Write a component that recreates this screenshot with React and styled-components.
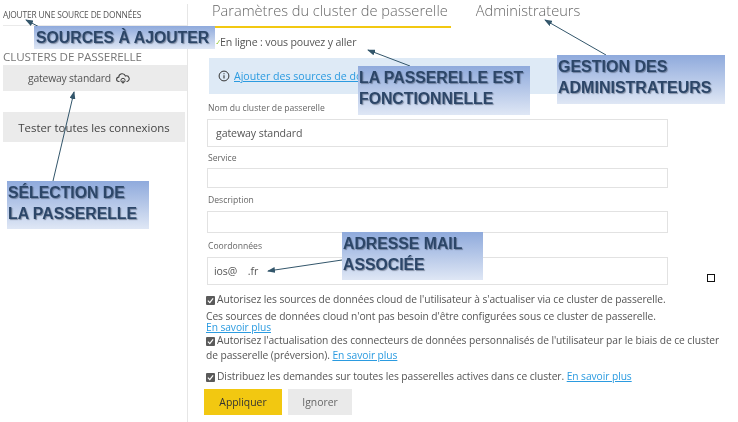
import styled, { createGlobalStyle } from 'styled-components'

const GlobalStyle = createGlobalStyle`
  html, body {
    margin: 0;
    padding: 0;
    background: #fff;
  }
  body {
    font-family: "Open Sans", "Noto Sans", sans-serif;
    color: #555;
  }
`;

const Page = styled.div`
  position: relative;
  width: 738px;
  height: 422px;
  overflow: hidden;
  display: flex;
  background: #fff;
  filter: blur(0.3px);
`;

const Sidebar = styled.aside`
  width: 184px;
  margin-top: 4px;
  padding-left: 3px;
  flex-shrink: 0;
  border-right: 1px solid #e6e6e6;
  display: flex;
  flex-direction: column;
`;

const AddSource = styled.div`
  height: 21px;
  line-height: 21px;
  font-size: 8.4px;
  letter-spacing: -0.15px;
  color: #555;
  white-space: nowrap;
  border-bottom: 1px solid #eaeaea;
`;

const SideTitle = styled.div`
  margin-top: 24px;
  font-size: 11.6px;
  line-height: 14px;
  letter-spacing: -0.1px;
  color: #777;
  white-space: nowrap;
`;

const ClusterRow = styled.div`
  margin-top: 1px;
  height: 26px;
  background: #ebebeb;
  display: flex;
  align-items: center;
  gap: 5px;
  padding-left: 25px;
  font-size: 10.4px;
  letter-spacing: -0.2px;
  color: #555;
`;

const TestButton = styled.div`
  margin-top: 21px;
  width: 182px;
  height: 30px;
  background: #ebebeb;
  display: flex;
  align-items: center;
  justify-content: center;
  font-size: 11.4px;
  color: #444;
`;

const Main = styled.main`
  flex: 1;
  padding-left: 19px;
  min-width: 0;
`;

const Tabs = styled.nav`
  display: flex;
  gap: 25px;
  margin-left: 5px;
  height: 27px;
`;

const Tab = styled.div`
  font-size: 14.6px;
  font-weight: 300;
  line-height: 20px;
  color: #666;
  white-space: nowrap;
  height: 26px;
  padding-right: 3px;
  border-bottom: ${p => (p.$active ? '2px solid #f2c811' : 'none')};
`;

const Status = styled.div`
  display: flex;
  align-items: center;
  margin: 7px 0 0 9px;
  height: 16px;
  font-size: 10.6px;
  letter-spacing: -0.15px;
  color: #555;
`;

const InfoBar = styled.div`
  margin: 8px 70px 0 2px;
  height: 36px;
  padding-left: 9px;
  background: #deeaf6;
  display: flex;
  align-items: center;
  gap: 4px;
  font-size: 10.6px;
`;

const Link = styled.a`
  color: #2b9be0;
  text-decoration: underline;
  white-space: nowrap;
`;

const Form = styled.form`
  display: flex;
  flex-direction: column;
  margin-top: 9px;
`;

const Label = styled.label`
  font-size: 8.6px;
  line-height: 11px;
  color: #666;
  margin-top: ${p => p.$top || 0}px;
  margin-left: 1px;
`;

const Field = styled.div`
  box-sizing: border-box;
  width: 461px;
  height: ${p => p.$height}px;
  margin-top: ${p => p.$gap || 5}px;
  border: 1.5px solid #e2e2e2;
  padding-left: ${p => p.$inset || 8}px;
  display: flex;
  align-items: center;
  font-size: 10.6px;
  letter-spacing: -0.1px;
  color: #555;
`;

const Options = styled.div`
  margin: 7px 0 0 -1px;
  width: 520px;
  font-size: 10.25px;
  letter-spacing: -0.07px;
  color: #555;
`;

const OptionLine = styled.p`
  margin: ${p => p.$top || 0}px 0 0;
  line-height: ${p => p.$lineHeight || 14}px;
`;

const Check = styled.span`
  display: inline-flex;
  align-items: center;
  justify-content: center;
  width: 9px;
  height: 9px;
  margin-right: 2px;
  vertical-align: -1px;
  border-radius: 1px;
  background: #5a5a5a;
`;

const Actions = styled.div`
  display: flex;
  gap: 6px;
  margin: 6px 0 0 -3px;
`;

const ApplyButton = styled.button`
  width: 78px;
  height: 26px;
  border: none;
  padding: 0;
  background: #f2c811;
  color: #333;
  font: 10.4px "Open Sans", sans-serif;
`;

const IgnoreButton = styled(ApplyButton)`
  width: 64px;
  background: #eaeaea;
  color: #666;
`;

const Callout = styled.div`
  position: absolute;
  left: ${p => p.$x}px;
  top: ${p => p.$y}px;
  width: ${p => p.$w}px;
  height: ${p => p.$h}px;
  box-sizing: border-box;
  padding: ${p => p.$pad || '1px 1px 0'};
  background: linear-gradient(#8faadc, #dfe7f5);
  font-family: "Liberation Sans", Arial, sans-serif;
  font-weight: 700;
  font-size: ${p => p.$size || 15.8}px;
  line-height: 21px;
  color: #2c4668;
  text-shadow: 1px 1px 1px rgba(40, 50, 70, 0.45);
  white-space: nowrap;
`;

const Arrows = styled.svg`
  position: absolute;
  inset: 0;
  pointer-events: none;
`;

const Handle = styled.div`
  position: absolute;
  left: 707px;
  top: 274px;
  width: 8px;
  height: 8px;
  box-sizing: border-box;
  border: 1px solid #111;
  background: #fff;
`;

const CheckIcon = () => (
  <Check>
    <svg width="7" height="7" viewBox="0 0 8 8">
      <path d="M1 4.2 3.2 6.4 7 1.6" fill="none" stroke="#fff" strokeWidth="1.4" />
    </svg>
  </Check>
);

const CloudIcon = () => (
  <svg width="14" height="11" viewBox="0 0 14 11">
    <path d="M3.5 8.5H2.8A2.2 2.2 0 0 1 2.8 4.1 3.4 3.4 0 0 1 9.4 3 2.8 2.8 0 0 1 11.2 8.5H10.5" fill="none" stroke="#444" strokeWidth="1.1" />
    <circle cx="7" cy="7.4" r="2.1" fill="none" stroke="#444" strokeWidth="1" />
    <path d="M7 7.4V10.5" stroke="#444" strokeWidth="1.2" />
  </svg>
);

const InfoIcon = () => (
  <svg width="12" height="12" viewBox="0 0 12 12">
    <circle cx="6" cy="6" r="4.9" fill="none" stroke="#333" strokeWidth="1" />
    <path d="M6 5.2V8.6M6 3.2V4.3" stroke="#333" strokeWidth="1.1" />
  </svg>
);

const arrows = [
  [45, 30, 26, 20],
  [53, 181, 74, 92],
  [410, 66, 368, 50],
  [606, 55, 545, 20],
  [342, 260, 268, 271],
];

const learnMore = 'En savoir plus';

const App = () => (
  <Page>
    <GlobalStyle />
    <Sidebar>
      <AddSource>AJOUTER UNE SOURCE DE DONNÉES</AddSource>
      <SideTitle>CLUSTERS DE PASSERELLE</SideTitle>
      <ClusterRow>
        gateway standard <CloudIcon />
      </ClusterRow>
      <TestButton>Tester toutes les connexions</TestButton>
    </Sidebar>
    <Main>
      <Tabs>
        <Tab $active>Paramètres du cluster de passerelle</Tab>
        <Tab>Administrateurs</Tab>
      </Tabs>
      <Status>
        <svg width="4" height="6" viewBox="0 0 5 6">
          <path d="M0.5 4.5 1.5 5.5 4.5 0.5" fill="none" stroke="#7fba00" strokeWidth="0.8" />
        </svg>
        En ligne : vous pouvez y aller
      </Status>
      <InfoBar>
        <InfoIcon />
        <Link>Ajouter des sources de données à utiliser</Link>
      </InfoBar>
      <Form>
        <Label>Nom du cluster de passerelle</Label>
        <Field $height={28}>gateway standard</Field>
        <Label $top={6}>Service</Label>
        <Field $height={20} $gap={4} />
        <Label $top={7}>Description</Label>
        <Field $height={22} $gap={5} />
        <Label $top={8}>Coordonnées</Label>
        <Field $height={28} $gap={5} $inset={6}>ios@&nbsp;&nbsp;&nbsp;&nbsp;.fr</Field>
        <Options>
          <OptionLine>
            <CheckIcon />
            Autorisez les sources de données cloud de l'utilisateur à s'actualiser via ce cluster de passerelle.
          </OptionLine>
          <OptionLine $top={5} $lineHeight={11}>
            Ces sources de données cloud n'ont pas besoin d'être configurées sous ce cluster de passerelle.
          </OptionLine>
          <OptionLine $lineHeight={11}>
            <Link>{learnMore}</Link>
          </OptionLine>
          <OptionLine $lineHeight={15}>
            <CheckIcon />
            Autorisez l'actualisation des connecteurs de données personnalisés de l'utilisateur par le biais de ce cluster de passerelle (préversion). <Link>{learnMore}</Link>
          </OptionLine>
          <OptionLine $top={6}>
            <CheckIcon />
            Distribuez les demandes sur toutes les passerelles actives dans ce cluster. <Link>{learnMore}</Link>
          </OptionLine>
        </Options>
        <Actions>
          <ApplyButton type="button">Appliquer</ApplyButton>
          <IgnoreButton type="button">Ignorer</IgnoreButton>
        </Actions>
      </Form>
    </Main>

    <Arrows width="738" height="422" viewBox="0 0 738 422">
      <defs>
        <marker id="head" markerWidth="8" markerHeight="6" refX="7" refY="3" orient="auto" markerUnits="userSpaceOnUse">
          <path d="M0 0 8 3 0 6Z" fill="#33566b" />
        </marker>
      </defs>
      {arrows.map(([x1, y1, x2, y2]) => (
        <line key={x1} x1={x1} y1={y1} x2={x2} y2={y2} stroke="#33566b" strokeWidth="1" markerEnd="url(#head)" />
      ))}
    </Arrows>

    <Callout $x={34} $y={26} $w={181} $h={23} $pad="1px 2px 0">SOURCES À AJOUTER</Callout>
    <Callout $x={7} $y={181} $w={142} $h={48}>SÉLECTION DE<br />LA PASSERELLE</Callout>
    <Callout $x={358} $y={66} $w={172} $h={49}>LA PASSERELLE EST<br />FONCTIONNELLE</Callout>
    <Callout $x={557} $y={55} $w={168} $h={49} $size={16}>GESTION DES<br />ADMINISTRATEURS</Callout>
    <Callout $x={342} $y={232} $w={141} $h={48}>ADRESSE MAIL<br />ASSOCIÉE</Callout>
    <Handle />
  </Page>
);

export default App;
